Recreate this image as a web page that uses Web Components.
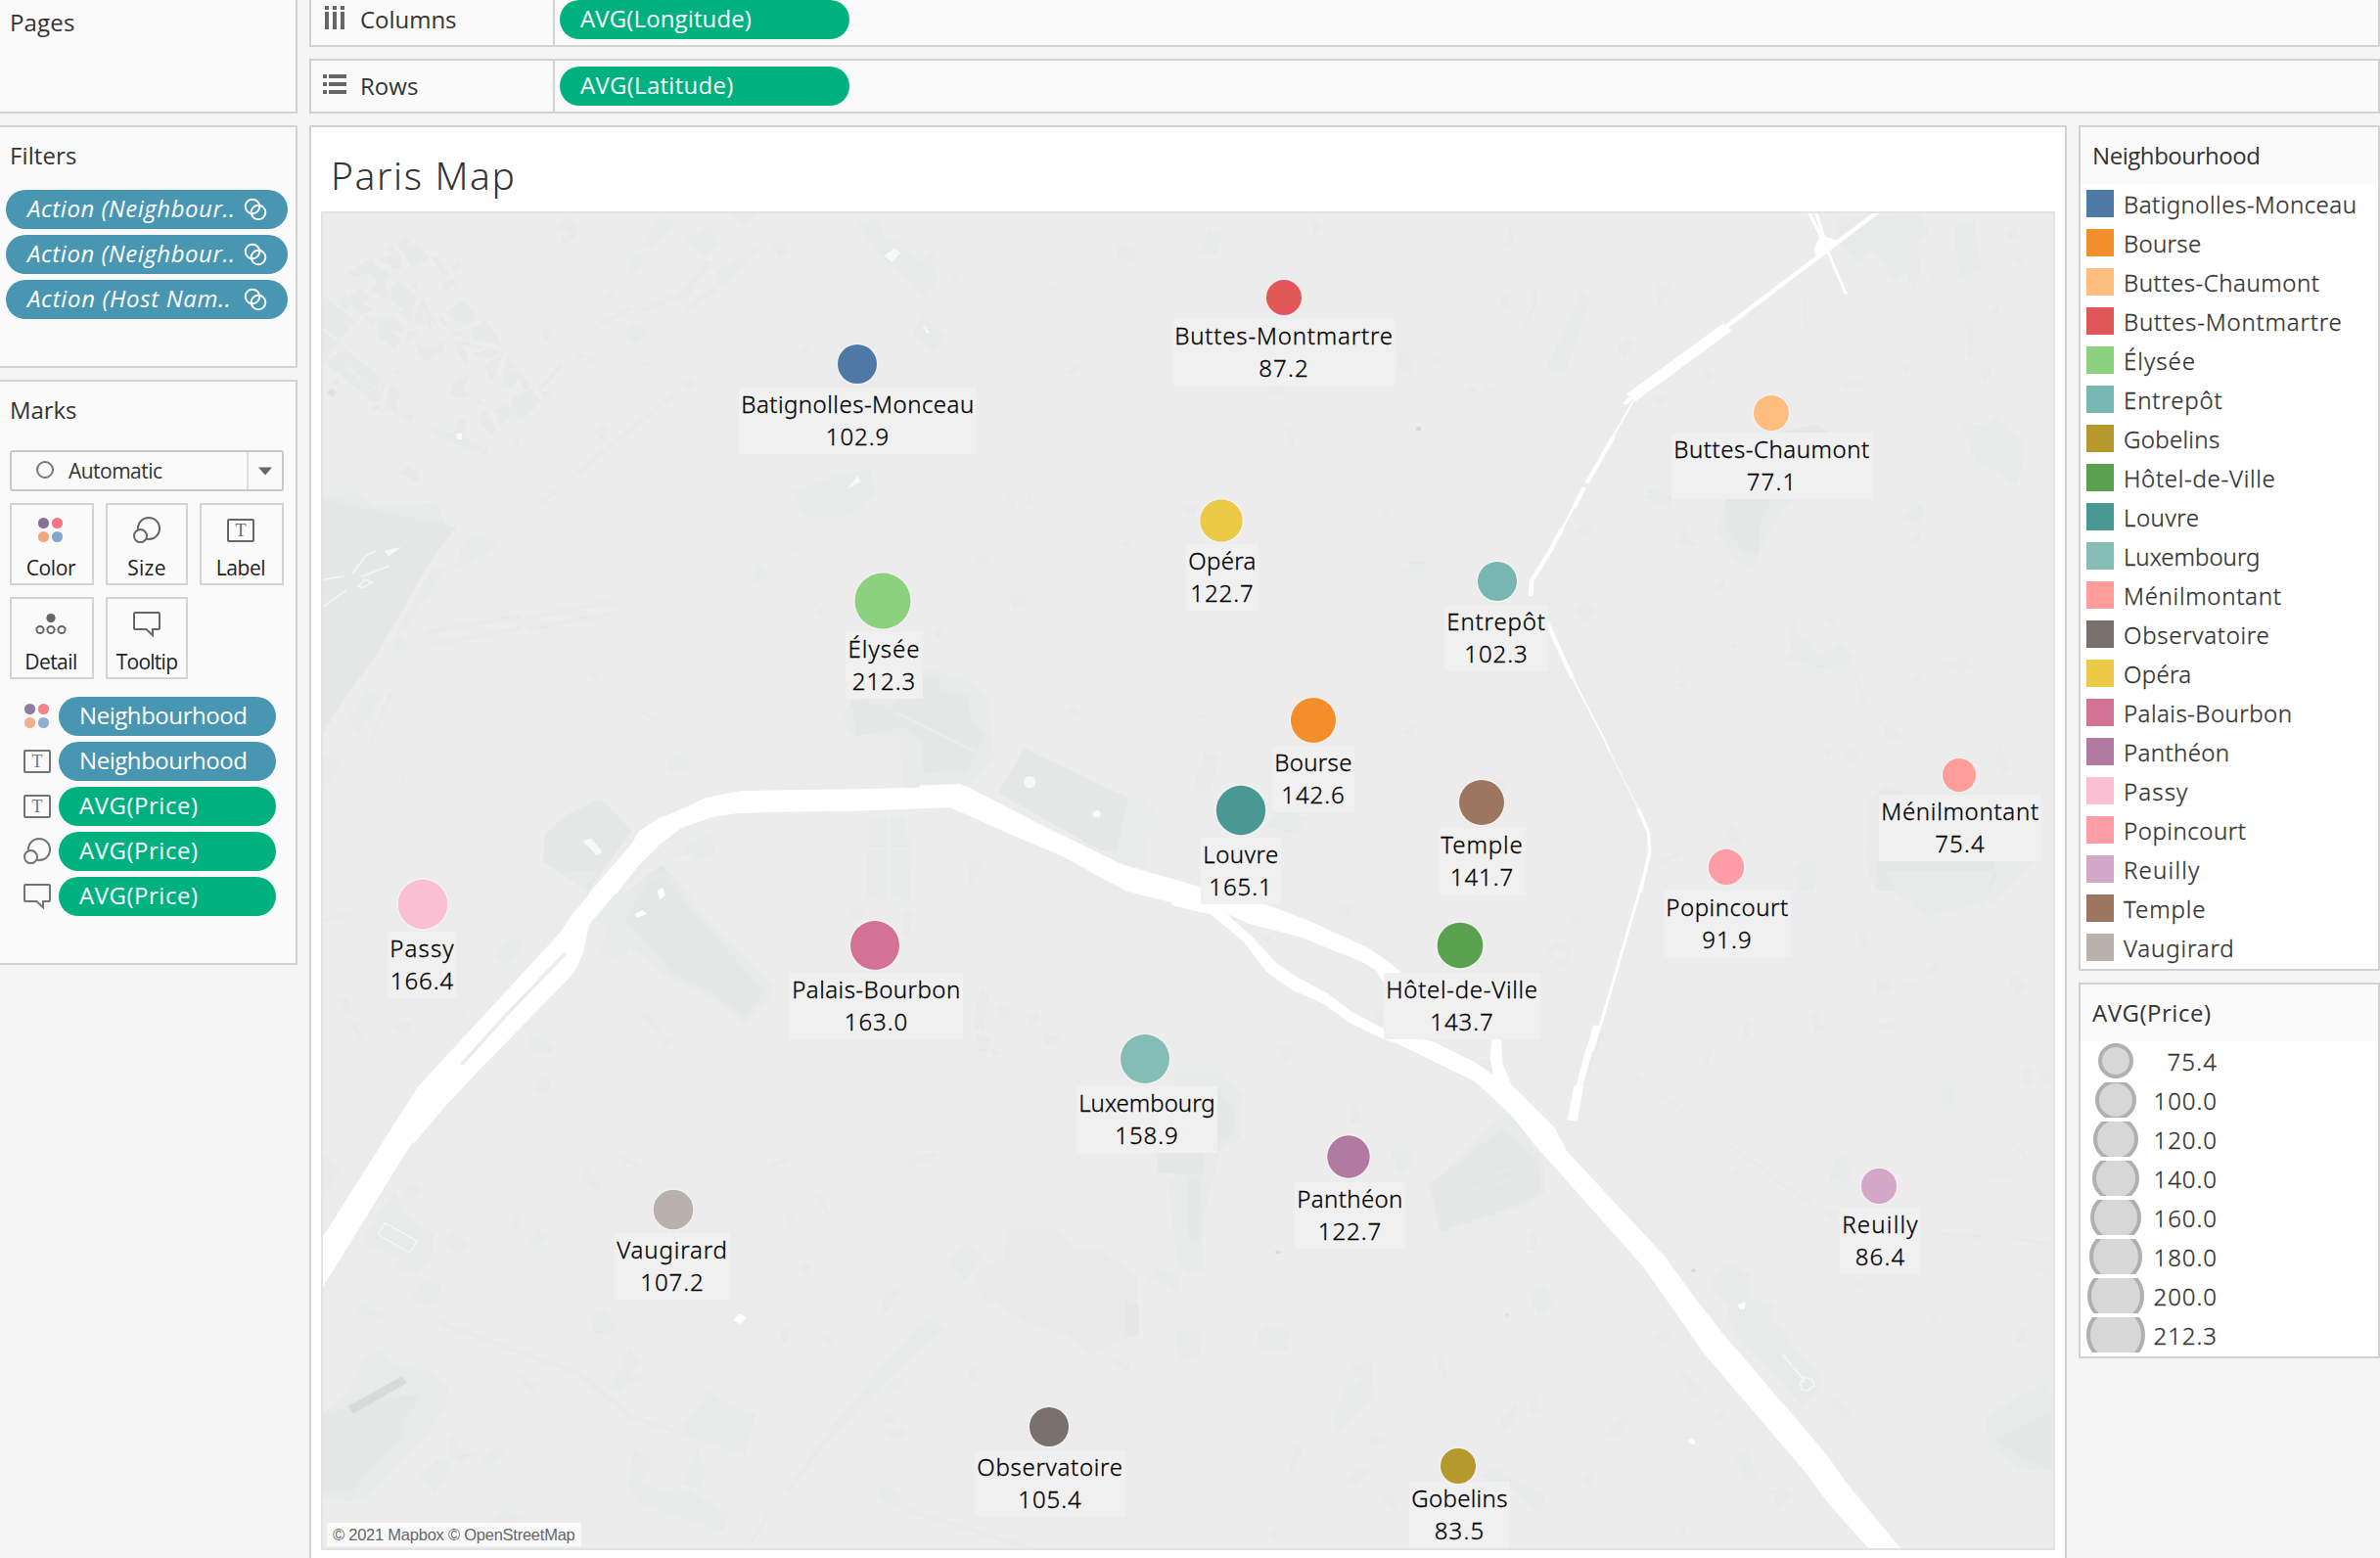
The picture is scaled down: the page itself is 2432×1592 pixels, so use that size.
<!DOCTYPE html>
<html lang="en">
<head>
<meta charset="utf-8">
<title>Paris Map</title>
<style>
html,body{margin:0;padding:0}
body{width:2432px;height:1592px;overflow:hidden;background:#f5f5f5;font-family:"Open Sans","Noto Sans",sans-serif;font-size:24px;color:#333}
</style>
</head>
<body>
<viz-workbook></viz-workbook>
<script>
const define = (name, html, setup) => {
  const tpl = document.createElement('template');
  tpl.innerHTML = html;
  customElements.define(name, class extends HTMLElement {
    connectedCallback() {
      if (this.shadowRoot) return;
      const root = this.attachShadow({ mode: 'open' });
      root.appendChild(tpl.content.cloneNode(true));
      if (setup) setup(this, root);
    }
  });
};

const NEIGHBOURHOODS = [
  // name, colour, text width, price, cx, cy, r, label centre, label top
  ['Batignolles-Monceau', '#4e79a7', 236, '102.9', 876, 372, 20, 876, 396],
  ['Bourse', '#f28e2b', 77, '142.6', 1342, 736, 23, 1342, 762],
  ['Buttes-Chaumont', '#ffbe7d', 198, '77.1', 1810, 422, 18, 1810, 442],
  ['Buttes-Montmartre', '#e15759', 221, '87.2', 1312, 304, 18, 1312, 326],
  ['Élysée', '#8cd17d', 71.5, '212.3', 902, 614, 28.5, 903, 646],
  ['Entrepôt', '#76b7b2', 99, '102.3', 1530, 594, 20, 1529, 618],
  ['Gobelins', '#b6992d', 96, '83.5', 1490, 1498, 18, 1491, 1514],
  ['Hôtel-de-Ville', '#59a14f', 153, '143.7', 1492, 966, 23.3, 1494, 994],
  ['Louvre', '#499894', 75, '165.1', 1268, 828, 25.2, 1268, 856],
  ['Luxembourg', '#86bcb6', 137, '158.9', 1170, 1082, 25, 1172, 1110],
  ['Ménilmontant', '#ff9d9a', 159, '75.4', 2002, 792, 17, 2003, 812],
  ['Observatoire', '#79706e', 147, '105.4', 1072, 1458, 20, 1073, 1482],
  ['Opéra', '#edc948', 67, '122.7', 1248, 532, 21.7, 1249, 556],
  ['Palais-Bourbon', '#d37295', 170, '163.0', 894, 966, 25, 895, 994],
  ['Panthéon', '#b07aa1', 106, '122.7', 1378, 1182, 21.7, 1379, 1208],
  ['Passy', '#fabfd2', 64, '166.4', 432, 924, 25.2, 431, 952],
  ['Popincourt', '#ff9da7', 123, '91.9', 1764, 886, 18.2, 1765, 910],
  ['Reuilly', '#d4a6c8', 76, '86.4', 1920, 1212, 18, 1921, 1234],
  ['Temple', '#9d7660', 82, '141.7', 1514, 820, 23, 1514, 846],
  ['Vaugirard', '#bab0ac', 111, '107.2', 688, 1236, 20.3, 687, 1260]
];

/* Single line of text tracked out to a given width */
define('fit-text', `<style>:host{display:block;white-space:pre;line-height:inherit}span{display:inline-block}</style><span><slot></slot></span>`,
  (host, root) => {
    const s = root.querySelector('span');
    const w = parseFloat(host.getAttribute('w'));
    const natural = s.getBoundingClientRect().width;
    const n = host.textContent.length;
    if (w && natural) s.style.letterSpacing = ((w + 2.5 - natural) / n).toFixed(3) + 'px';
  });

const ICONS = {
  color: '<g stroke="none"><circle cx="6.5" cy="6.5" r="5.6" fill="#86709a"/><circle cx="20.5" cy="6.5" r="5.6" fill="#f97484"/><circle cx="6.5" cy="20.5" r="5.6" fill="#f4a67d"/><circle cx="20.5" cy="20.5" r="5.6" fill="#82a6cd"/></g>',
  size: '<circle cx="16" cy="12" r="11.1"/><circle cx="7.5" cy="19.6" r="6.5" fill="#fafafa"/>',
  label: '<rect x="1" y="3" width="26" height="22" rx="1"/><text x="14" y="20" text-anchor="middle" font-family="Liberation Serif,serif" font-size="18" fill="#666" stroke="none">T</text>',
  detail: '<circle cx="14" cy="7.5" r="4.6" fill="#666" stroke="none"/><circle cx="3" cy="19.5" r="3.6"/><circle cx="14" cy="19.5" r="3.6"/><circle cx="25" cy="19.5" r="3.6"/>',
  tooltip: '<path d="M2 2H26Q27 2 27 3V18Q27 19 26 19H20V25.2L13.5 19H2Q1 19 1 18V3Q1 2 2 2Z"/>',
  columns: '<path fill="#666" stroke="none" d="M2 2h4v4H2zM10 2h4v4h-4zM18 2h4v4h-4zM2 8h4v18H2zM10 8h4v18h-4zM18 8h4v18h-4z"/>',
  rows: '<path fill="#666" stroke="none" d="M0 4h4v4H0zM0 12h4v4H0zM0 20h4v4H0zM6 4h18v4H6zM6 12h18v4H6zM6 20h18v4H6z"/>',
  link: '<g stroke="#fff"><ellipse cx="11" cy="11" rx="7.3" ry="7.3"/><ellipse cx="17" cy="17" rx="7.3" ry="7.3"/></g>',
  circle: '<circle cx="14" cy="14" r="8" stroke="#777"/>',
  arrow: '<path fill="#666" stroke="none" d="M7 10.5H21L14 18.5Z"/>'
};
define('viz-icon', `<style>:host{display:block;width:28px;height:28px;flex:none}svg{display:block;overflow:visible}</style><svg width="28" height="28" fill="none" stroke="#666" stroke-width="2"></svg>`,
  (host, root) => { root.querySelector('svg').innerHTML = ICONS[host.getAttribute('name')]; });

define('viz-card', `<style>
:host{display:block;box-sizing:border-box;border:2px solid #d3d3d3;background:#fafafa;overflow:hidden}
header{height:58px;line-height:57px;padding-left:var(--head-x,9px)}
</style><header><slot name="title"></slot></header><slot></slot>`);

define('viz-pill', `<style>
:host{display:flex;box-sizing:border-box;height:40px;line-height:37px;border-radius:20px;padding-left:21px;color:#fff;background:#4996b2;overflow:hidden}
:host([kind=measure]){background:#00b180}
:host([action]){font-style:italic;justify-content:space-between;padding-left:22px;padding-right:19px}
viz-icon{margin-top:6px;display:none}:host([action]) viz-icon{display:block}
</style><slot></slot><viz-icon name="link"></viz-icon>`);

define('mark-button', `<style>
:host{display:flex;flex-direction:column;align-items:center;box-sizing:border-box;height:84px;border:2px solid #d3d3d3;padding-top:12px;padding-right:var(--nudge,0px);font-size:21px;color:#222}
div{line-height:42px;margin-top:3px}
</style><viz-icon></viz-icon><div><slot></slot></div>`,
  (host, root) => root.querySelector('viz-icon').replaceWith(Object.assign(document.createElement('template'), { innerHTML: `<viz-icon name="${host.getAttribute('icon')}"></viz-icon>` }).content));

define('viz-shelf', `<style>
:host{display:flex;box-sizing:border-box;height:56px;border:2px solid #d3d3d3;background:#fafafa}
.name{display:flex;box-sizing:border-box;width:249px;border-right:2px solid #d3d3d3;padding-left:12px;line-height:51px}
.icon{width:38px;padding-top:10px}
.pills{padding:6px 0 0 5px;width:296px}
</style><div class="name"><div class="icon"><slot name="icon"></slot></div><slot name="title"></slot></div><div class="pills"><slot></slot></div>`);

define('mark-select', `<style>
:host{display:flex;box-sizing:border-box;height:42px;border:2px solid #c8c8c8;border-radius:3px;font-size:21px;line-height:39px;margin:12px 12px 12px 10px}
.c{padding:4px 10px 0 20px}.t{flex:1}.a{width:34px;border-left:2px solid #dedede;padding-top:5px;display:flex;justify-content:center}
</style><div class="c"><viz-icon name="circle"></viz-icon></div><div class="t"><slot></slot></div><div class="a"><viz-icon name="arrow"></viz-icon></div>`);

define('mark-row', `<style>:host{display:grid;grid-template-columns:28px 222px;column-gap:8px;padding-left:24px}.i{padding-top:6px;opacity:.9}</style><div class="i"><slot name="icon"></slot></div><slot></slot>`);

define('viz-sidebar', `<style>
:host{display:flex;flex-direction:column;gap:12px;--head-x:9px}
viz-card{border-left:none}
.pages{height:116px;border-top:none}.pages fit-text{margin-top:-6px}
.filters{height:248px}.marks{height:598px}
.list{display:flex;flex-direction:column;gap:6px}
.filters .list{padding:6px 8px 0 6px}
.marks .list{padding-top:18px}
.grid{display:grid;grid-template-columns:86px 84px 86px;gap:12px;padding-left:10px}
mark-button[icon=color],mark-button[icon=label],mark-button[icon=detail]{--nudge:2px}
viz-card{--head-x:10px}
</style>
<viz-card class="pages"><fit-text slot="title" w="64">Pages</fit-text></viz-card>
<viz-card class="filters"><fit-text slot="title" w="66">Filters</fit-text>
<div class="list">
<viz-pill action><fit-text w="210">Action (Neighbour..</fit-text></viz-pill>
<viz-pill action><fit-text w="210">Action (Neighbour..</fit-text></viz-pill>
<viz-pill action><fit-text w="206">Action (Host Nam..</fit-text></viz-pill>
</div></viz-card>
<viz-card class="marks"><fit-text slot="title" w="66">Marks</fit-text>
<mark-select><fit-text w="93">Automatic</fit-text></mark-select>
<div class="grid">
<mark-button icon="color"><fit-text w="48">Color</fit-text></mark-button>
<mark-button icon="size"><fit-text w="37">Size</fit-text></mark-button>
<mark-button icon="label"><fit-text w="48">Label</fit-text></mark-button>
<mark-button icon="detail"><fit-text w="51">Detail</fit-text></mark-button>
<mark-button icon="tooltip"><fit-text w="60">Tooltip</fit-text></mark-button>
</div>
<div class="list">
<mark-row><viz-icon slot="icon" name="color"></viz-icon><viz-pill><fit-text w="169">Neighbourhood</fit-text></viz-pill></mark-row>
<mark-row><viz-icon slot="icon" name="label"></viz-icon><viz-pill><fit-text w="169">Neighbourhood</fit-text></viz-pill></mark-row>
<mark-row><viz-icon slot="icon" name="label"></viz-icon><viz-pill kind="measure"><fit-text w="119">AVG(Price)</fit-text></viz-pill></mark-row>
<mark-row><viz-icon slot="icon" name="size"></viz-icon><viz-pill kind="measure"><fit-text w="119">AVG(Price)</fit-text></viz-pill></mark-row>
<mark-row><viz-icon slot="icon" name="tooltip"></viz-icon><viz-pill kind="measure"><fit-text w="119">AVG(Price)</fit-text></viz-pill></mark-row>
</div></viz-card>`);

define('viz-legends', `<style>
:host{display:flex;flex-direction:column;gap:12px;width:308px;--head-x:12px}
.body{background:#fff;font-family:"Noto Sans","Open Sans",sans-serif;font-weight:300;-webkit-text-stroke:.3px}
.colors{height:864px}.colors .body{height:802px;padding:6px 0 0 6px;box-sizing:border-box}
.row{display:flex;height:28px;margin-bottom:12px;line-height:30px}
.sw{width:28px;margin-right:10px}
.sizes{height:384px}.sizes .body{height:322px;box-sizing:border-box;padding:2px 0 0 6px}
.s{display:flex;height:36px;margin-bottom:4px;line-height:38px}
.s svg{width:60px;height:36px;display:block}
.v{width:74px;display:flex;justify-content:flex-end}
</style>
<viz-card class="colors"><fit-text slot="title" w="169">Neighbourhood</fit-text><div class="body" id="c"></div></viz-card>
<viz-card class="sizes"><fit-text slot="title" w="119">AVG(Price)</fit-text><div class="body" id="s"></div></viz-card>`,
  (host, root) => {
    root.getElementById('c').innerHTML = NEIGHBOURHOODS.map(n =>
      `<div class="row"><div class="sw" style="background:${n[1]}"></div><fit-text w="${n[2]}">${n[0]}</fit-text></div>`).join('');
    root.getElementById('s').innerHTML = [['75.4', 36], ['100.0', 42], ['120.0', 46], ['140.0', 48], ['160.0', 52], ['180.0', 54], ['200.0', 58], ['212.3', 60]].map(([v, d]) =>
      `<div class="s"><svg viewBox="0 0 60 36"><circle cx="30" cy="18" r="${d / 2 - 2}" fill="#d7d7d7" stroke="#b0b0b0" stroke-width="4"/></svg><div class="v"><fit-text w="${v.length > 4 ? 63 : 49}">${v}</fit-text></div></div>`).join('');
  });

/* Faint ground detail, water, then labels with circles over them */
define('paris-map', `<style>
:host{display:block;position:relative;width:1772px;height:1368px;margin-left:10px;background:#ececec;overflow:hidden}
svg{display:block}
.over{position:absolute;left:0;top:0}
.label{position:absolute;height:68px;line-height:33px;background:#f0f0f0;color:#000;display:flex;flex-direction:column;align-items:center;font-family:"Noto Sans","Open Sans",sans-serif;font-weight:300;-webkit-text-stroke:.3px}
.attr{position:absolute;left:6px;top:1340px;width:260px;height:24px;box-sizing:border-box;padding-left:6px;background:#fafafa;color:#666;font:16.5px/24px "Liberation Sans",sans-serif}
</style>
<svg width="1772" height="1368" viewBox="328 216 1772 1368">
<g id="suburb" transform="translate(320 210) scale(.33333)">
<path fill="#e6e9e7" d="M108 205L178 160L188 180L240 215L215 245L165 205L120 222ZM218 130L240 118L268 155L270 195L255 192L198 168L240 150ZM255 110L285 92L300 120L320 118L358 160L302 190ZM275 185L292 205L285 213L270 197ZM362 160L380 155L418 212L400 216ZM425 195L455 170L440 208ZM392 240L428 224L440 242L405 266ZM740 68L790 36L818 82L772 118L758 102L785 85L775 68L750 82ZM695 388L715 375L735 393L715 413ZM655 18L690 18L665 28Z"/>
<path fill="#e6e9e7" d="M75 298L98 272L120 300L100 322ZM112 282L140 254L175 280L150 300L185 318L150 335L195 345L180 375L158 345L128 320ZM170 262L205 230L235 268L215 285ZM240 245L262 232L318 280L300 358L258 325L280 320L235 290ZM300 240L315 238L315 255L302 258ZM305 360L335 280L392 385L330 315L345 368ZM345 340L360 345L368 378L350 372Z"/>
<path fill="#e6e9e7" d="M202 345L240 350L232 333L280 365L280 390L245 385L268 415L250 442L192 395ZM290 382L322 385L298 418L285 415ZM310 420L350 438L405 415L395 450L370 455L352 478L330 470ZM388 335L412 365L402 372L386 345ZM402 328L458 295L498 330L485 362L470 370ZM480 378L528 352L588 435L545 420L490 410ZM425 388L445 384L465 398L432 402ZM425 408L515 432L512 442L458 428L480 485L465 492ZM490 455L550 435L580 455L520 475Z"/>
<path fill="#e6e9e7" d="M522 490L585 455L550 545ZM575 550L595 462L668 550L650 568L632 535L590 562ZM608 590L668 562L700 602L640 658L610 640ZM552 625L600 612L612 632L575 676ZM508 655L525 622L565 690L545 702ZM430 540L470 520L480 530L455 560L488 585L450 592L420 580ZM495 605L510 592L522 615ZM250 505L262 500L265 518L252 522ZM690 560L760 482L768 490L700 568L735 575L708 595Z"/>
<path fill="#e6e9e7" d="M24 272L130 355L80 410L24 370ZM24 382L76 420L36 480L24 478ZM36 480L98 442L220 535L212 590L185 603ZM215 620L240 545L272 570L252 600L262 640ZM178 622L198 610L218 635ZM262 640L312 640L302 668ZM362 700L372 682L430 700L452 645L468 665L462 712L535 745L528 765ZM260 818L290 800L322 815L324 852ZM610 730L625 712L632 722L620 742ZM862 695L885 672L905 700L885 722ZM58 540L72 528L84 542L72 554ZM400 0"/>
<path fill="none" stroke="#ececec" stroke-width="4" d="M100 478L180 575M108 500L205 570L212 530M582 460L550 550M595 510L625 500"/>
<path fill="#dfe2e1" d="M40 575L55 560L72 570L62 587Z"/>
<path fill="#fafbfa" d="M438 700L458 696L456 718L442 718Z"/>
</g>
<g id="nw" transform="translate(320 210) scale(.57398 .44643)">
<g fill="#e7eae9">
<path d="M615 25L645 40L600 98L585 90ZM662 80L705 45L725 85L695 120ZM560 130L575 115L590 125L565 165ZM715 180L720 150L765 115L775 130L730 182ZM745 20L795 15L765 45ZM815 90L830 80L845 105L830 122Z"/>
<path d="M580 235L650 200L700 125L710 130L670 205L590 245ZM655 248L680 210L715 185L718 200ZM490 298L510 265L565 230L568 240L515 275ZM552 290L575 268L600 290L575 320ZM520 205L528 195L536 205L526 214ZM465 350L475 338L485 350ZM488 352L498 342L510 366ZM778 100L792 90L796 97L782 112Z"/>
<path d="M652 405L665 395L678 408L665 425ZM460 618L640 428L646 434L465 625ZM400 680L432 650L436 656L403 686ZM500 515L515 500L525 515L512 538ZM570 375L605 352L600 362Z"/>
<path d="M970 40L1005 30L1020 75L1050 75L1040 95L1085 130L1105 105L1100 145L1113 165L1090 215L1070 180L1000 105ZM1085 255L1128 305L1105 338L1068 290Z"/>
<path d="M855 655L925 620L992 605L1003 655L955 710L890 713L868 700ZM1235 660L1250 680L1245 703ZM1272 645L1285 685L1268 680Z"/>
<path d="M1430 95L1445 85L1465 100L1460 130L1435 120ZM1300 178L1325 188L1320 195ZM1135 165L1150 155L1142 185ZM1340 380L1368 362L1350 390ZM868 335L885 322L880 342ZM1432 775L1460 765L1450 785ZM1342 1155L1352 1148L1370 1163L1362 1175Z"/>
<path d="M775 860L797 820L813 855ZM1175 800L1205 802L1203 820L1180 818ZM1240 895L1268 890L1268 918L1245 925ZM890 905L912 925L900 942ZM853 785L862 780L865 795ZM1105 975L1118 965L1124 980L1112 992Z"/>
<path d="M250 835L270 765L300 752L327 780L285 815ZM152 965L185 890L215 825L235 835L190 920L165 970ZM195 985L210 968L365 935L370 945ZM380 940L525 902L540 912L385 948ZM200 1003L370 962V972L220 1010ZM380 965L520 932L540 938L390 972ZM138 1000L152 982L172 998L165 1020L145 1018Z"/>
<path d="M65 1175L95 1105L122 1125L80 1210ZM98 1225L135 1115L145 1118L103 1230ZM14 1260L50 1275L14 1350ZM155 1318L168 1285L160 1325ZM575 1155L615 1172L610 1180ZM490 1080L500 1068L508 1085ZM630 1270L652 1256L672 1275L668 1295L635 1297Z"/>
<path d="M14 662L90 660L105 690L220 680L235 728L14 740Z" opacity=".7"/>
<path d="M990 1400L1055 1400L1055 1440L1067 1445L1063 1568L985 1568ZM645 1490L670 1455L705 1440L715 1480L680 1505L670 1485ZM1165 1515L1180 1495L1195 1505L1170 1568Z"/>
<path d="M940 1175L960 1130L1095 1060L1165 1090L1205 1135L1212 1270L1170 1325L1050 1340L1045 1215L960 1210Z" opacity=".8"/>
<path d="M1440 1355L1480 1355L1510 1410L1480 1460L1485 1520L1420 1500Z" opacity=".6"/>
</g>
<g fill="#e4e7e5">
<path d="M14 672L255 735L205 820L145 960L95 1060L60 1120L14 1215Z"/>
<path d="M412 1440L450 1395L512 1358L567 1430L490 1568L410 1502Z"/>
<path d="M960 1130L1030 1150L1065 1085L1110 1080L1120 1110L1165 1120L1170 1170L1195 1215L1165 1295L1085 1300L1085 1225L1050 1195L965 1215Z"/>
<path d="M1265 1242L1450 1355L1430 1480L1400 1475L1220 1345Z"/>
<path d="M560 1568L620 1510L665 1568Z"/>
</g>
<g fill="none" stroke="#ececec" stroke-width="4"><path d="M1035 1160L1180 1250M985 1472H1065M985 1524H1060M1025 1400V1568"/></g>
<g fill="#f7f9f8"><path d="M1017 115L1035 98L1046 108L1030 130ZM480 1455L495 1448L515 1480L505 1488ZM125 790L158 782L135 802ZM950 650L970 618L975 632ZM1085 272L1098 290L1093 294Z"/><ellipse cx="1276" cy="1320" rx="10" ry="14"/><ellipse cx="1395" cy="1393" rx="7" ry="8"/></g>
<path fill="none" stroke="#f5f7f6" stroke-width="3" d="M70 842L95 800L112 790M14 857L55 848M85 850L135 825M14 922L60 880M80 872L92 856L105 862L90 874Z"/>
<path fill="#fff" d="M490 1575L548 1490L570 1455L580 1432L615 1402L635 1393L700 1355L760 1340L985 1335L1080 1332V1327L1150 1324L1168 1332L1300 1420L1440 1508L1575 1558L1575 1610L1450 1570L1405 1540L1335 1490L1225 1430L1135 1378L960 1386L820 1388L750 1392L710 1400L655 1425L620 1460L580 1510L540 1575Z"/>
</g>
<g id="ne" transform="translate(1200 210) scale(.5816 .44643)">
<g fill="#e7eae9">
<path d="M45 105L60 55L85 62L75 112ZM240 40L245 25L260 45L245 75ZM655 370L715 197L733 210L690 372L680 380ZM575 205L590 205L588 235L572 228ZM625 190L638 195L630 250L608 300L628 230ZM580 95L590 50L596 90Z"/>
<path d="M1160 25L1310 20L1325 65L1305 85L1310 150L1300 200L1285 150L1265 170L1225 100L1200 130L1165 85ZM1370 50L1405 35L1418 150L1380 165ZM1325 145L1340 185L1330 175ZM1108 195L1113 290L1105 270ZM1462 60L1480 50L1485 80L1465 75ZM1475 120H1490V132H1478Z"/>
<path d="M845 180L875 182L850 235ZM780 320L795 303L808 310L790 355ZM395 340L410 335L418 385L395 370ZM515 415H530V427H515ZM545 417H562V427H545ZM455 350L472 352V362L457 360ZM166 415H195L190 433H168ZM920 355L948 395L938 405ZM845 440L865 435L858 458L842 450Z"/>
<path d="M1390 265L1405 262L1402 350H1395ZM1412 370L1435 372L1425 410ZM1430 245L1448 220L1445 250ZM1277 368L1298 358L1285 385ZM1175 410L1205 397L1210 410L1180 420ZM1380 495L1420 505L1442 485L1490 545L1495 575L1480 640L1445 610L1410 590Z"/>
<path d="M825 670L835 648L875 665L870 690ZM702 745L720 730L735 735L725 763ZM885 770L895 735L910 770L922 778L905 782ZM358 690L378 700L370 718ZM390 825L412 830L415 815H440L438 838H412ZM702 930L720 905L743 925L722 953ZM965 875L945 885L968 845ZM1275 715L1310 685L1320 700L1305 730ZM1292 765L1305 745L1312 765L1295 782Z"/>
<path d="M1075 975L1092 952L1095 985L1120 1000L1125 1025L1150 1020L1170 1005L1192 1030L1185 1050L1130 1058L1100 1045L1065 1040L1085 1020ZM1190 1055L1218 1135H1208ZM1352 1050L1390 1030L1403 1060L1380 1070ZM1145 945L1155 940L1168 970ZM1240 1180L1280 1215L1275 1228L1255 1220ZM1175 1260L1190 1240L1203 1250L1188 1275ZM1440 1270L1450 1240L1470 1285L1460 1300ZM1138 1245L1155 1240L1152 1272ZM970 1008L985 1002L988 1015ZM885 1050L898 1065L890 1072ZM885 1092H900V1105H888Z"/>
<path d="M30 1335L55 1250L77 1260L62 1345ZM400 1205L415 1185L427 1195L418 1215ZM555 1300L585 1330L580 1345ZM840 1508L890 1480L888 1490L845 1512ZM965 1440L980 1420L1000 1455L985 1465ZM1085 1520L1108 1497L1128 1505L1125 1568H1100ZM160 1420L190 1385L235 1400L222 1430L195 1435ZM18 690H38V708H20ZM40 1160L60 1170L45 1178ZM195 510H205L210 555H200ZM1298 1080L1315 1070V1085L1302 1090Z"/>
<path d="M1218 1355L1250 1330L1523 1420L1510 1500L1460 1568H1230L1215 1500ZM950 745L970 672L1085 672L1055 730L1030 790L1010 830L985 810Z" opacity=".8"/>
</g>
<g fill="#e4e7e5"><path d="M970 672H1050L1030 730L1025 800L1000 790L970 745ZM1060 520L1130 500L1150 520ZM1235 1500L1440 1500L1450 1568H1235Z"/></g>
<circle cx="429" cy="511" r="4.5" fill="#d5d8d7"/>
<g fill="none" stroke="#fff" stroke-linecap="butt">
<path stroke-width="9" d="M1240 10L965 282"/><path stroke-width="23" d="M972 278L802 440"/><path stroke-width="8" d="M812 430L790 455"/>
<path stroke-width="3.5" d="M806 448L770 530"/><path stroke-width="8" d="M772 528L725 635M720 645L702 692"/><path stroke-width="4" d="M702 690L678 748"/>
<path stroke-width="8" d="M680 742L660 792L628 858L626 890" stroke-linecap="round"/>
<path stroke-width="6" d="M1115 15L1138 75L1138 115M1127 15L1142 75"/><path stroke-width="5" d="M1148 105L1180 203"/>
<path stroke-width="8" d="M655 955L700 1083"/><path stroke-width="3" d="M700 1083L755 1220L765 1250"/><path stroke-width="2.5" stroke="#f8f8f8" d="M765 1250L817 1385"/><path stroke-width="6" d="M815 1380L833 1435L835 1480L819 1572"/>
</g>
<path fill="#fff" d="M1128 120L1124 100L1135 68L1168 82L1145 112Z"/>
<path fill="#fff" d="M-5 1545L60 1565V1580H-5Z"/>
</g>
<g id="sw" transform="translate(320 890) scale(.57398 .4477)">
<g fill="#e7eae9">
<path d="M445 0H510L480 42ZM515 170L525 110L562 180L545 198L505 190ZM325 195L350 155L375 160L372 185L345 215ZM378 405L390 375L430 400L420 418ZM395 500L402 470L422 480L418 515ZM580 325L595 320L620 355L612 372ZM617 395L635 372L645 382L625 405ZM42 292L60 290L70 320L55 325ZM65 350L75 345L92 390L80 390ZM145 355L185 335L165 378ZM14 108L70 92L72 100L14 118ZM258 340L270 310L272 325Z"/>
<path d="M985 5L1020 0L1018 68L985 62ZM1028 10L1062 15V68L1030 60ZM955 85H985L975 115L955 105ZM1052 90H1068L1060 155L1048 150ZM1175 345L1190 268L1202 285L1195 365L1178 360ZM1182 372L1205 380L1205 412H1185ZM1218 305H1240V335L1220 330ZM1270 325L1293 322L1292 345L1275 352ZM1297 370L1333 378L1318 395L1303 397ZM1015 408L1040 390M1205 405L1228 412L1210 426Z"/>
<path d="M1057 668L1070 650L1110 640L1112 648L1065 678ZM548 648L583 668L580 678L555 665ZM475 705L490 675L500 700L515 715L505 735ZM810 670L842 655L845 662L815 678ZM160 735L175 710L193 728L182 748ZM235 850L245 825L278 850L262 875L240 865ZM348 810L362 780L373 790L360 818ZM380 845L400 815L422 830L400 858ZM895 740L903 738L920 780L912 782ZM838 790L848 775L860 790L850 812ZM865 905L875 892L887 905L877 920Z"/>
<path d="M14 640L50 680L14 755ZM90 830L145 730L160 780L215 830L210 880L180 922L145 905L155 880L92 850ZM172 975L195 932L228 950L222 980L200 995ZM78 1010L88 988L132 1020ZM492 1015L515 1000L548 1050L500 1055ZM215 1015L240 1032L480 1145L570 1240L645 1275L640 1282L560 1250L475 1155L235 1042ZM525 1180L565 1092L583 1120L565 1150L585 1155L540 1190Z"/>
<path d="M1127 895L1160 848L1193 880L1160 935ZM1010 1020L1018 970L1035 948L1050 955L1030 990ZM1075 1040L1100 1025L1130 1045L1090 1080L975 1220L930 1285L845 1420L840 1415L925 1265ZM1182 965L1200 960L1208 980L1195 985ZM1485 930L1500 905L1545 930L1540 965L1515 945ZM1535 1050L1568 1050V1115L1540 1118ZM1410 1110L1455 1125L1452 1145Z"/>
<path d="M650 1285L705 1185L745 1220L788 1240L768 1332ZM572 1315L605 1350L580 1400L650 1425L665 1410L740 1470L730 1505L580 1445L560 1400ZM675 1350L685 1318L692 1350L698 1370L690 1410L655 1400ZM190 1380L225 1340L250 1360L215 1418ZM245 1285L265 1330L290 1330L262 1355L240 1330ZM362 1145L400 1175L395 1195L380 1185ZM290 1350L325 1318L350 1320L320 1355Z"/>
<path d="M1005 1402L1040 1415L1045 1430L1040 1450L1005 1435ZM1055 1452L1300 1550H1270L1055 1462ZM1015 1240L1040 1245L1035 1262L1015 1258ZM1015 1278L1050 1270L1055 1285L1030 1300ZM1020 1165L1035 1155L1052 1170L1035 1185ZM1165 1135L1180 1130L1185 1165H1168ZM775 1545L790 1500L815 1452L800 1500ZM830 1070L838 1040L852 1045L840 1080ZM905 1070L920 1060L928 1068L920 1085ZM310 1490L340 1460L380 1475L340 1490Z"/>
<path d="M14 1240L60 1190L90 1110L120 1095L145 1125L215 1145L240 1180L235 1230L200 1290L170 1330L95 1430L60 1440L14 1430Z" opacity=".7"/>
<path d="M1175 920L1228 885L1235 820L1325 818L1350 860L1410 870L1465 920L1470 1060L1440 1070L1390 1105L1340 1060L1265 1030L1190 965Z" fill="#e8e9e8"/>
<path d="M500 110L540 60L600 10L640 5L690 90L820 265L815 290L768 348L720 300L640 250L580 190Z" opacity=".8"/>
</g>
<g fill="#e4e7e5">
<path d="M14 1240L70 1225L130 1200L195 1195L155 1260L165 1290L90 1380L70 1418L14 1418Z"/>
<path d="M555 110L600 20L630 15L680 100L805 275L765 335L720 285L640 235L590 155Z"/>
<path d="M1445 980L1470 990L1470 1060L1445 1060Z"/>
</g>
<path fill="#d9dbda" d="M62 1222L158 1153L167 1168L72 1238Z"/>
<path fill="none" stroke="#f6f8f7" stroke-width="2.5" d="M128 803L185 845L172 872L116 830Z"/>
<path fill="#fff" d="M748 1025L758 1010L771 1018L762 1035ZM612 45L622 37L627 55L618 65ZM572 100L585 90L595 98L578 106Z"/>
<path fill="#fff" d="M530 -8L455 110L440 140L185 495L10 850V965L175 622L182 618L240 530L290 462L465 232L480 190L492 122L576 -8Z"/>
<path stroke="#ececec" stroke-width="7" d="M449 188L350 320L264 442"/>
</g>
<g id="se" transform="translate(1200 890) scale(.5816 .4477)">
<g fill="#e7eae9">
<path d="M285 85L295 70L318 88L310 105L290 102ZM145 140L172 150L165 168ZM695 105L705 98L718 112L710 128ZM1085 0H1125L1130 25L1110 45ZM1250 0H1440L1420 75L1320 105L1270 50ZM1425 60L1440 25L1470 15L1440 78ZM1198 145L1210 135L1225 170L1210 178ZM1315 230L1340 208L1350 220L1325 238ZM1235 250L1255 248L1262 275L1235 280ZM1285 262L1302 248L1308 262L1290 270ZM1468 250L1480 235L1495 262L1480 290ZM1118 330L1128 322L1145 365L1125 370ZM1238 350L1270 345L1260 362H1242ZM998 380L1005 340L1015 345L1008 380ZM925 438L940 402L948 408L935 445ZM1488 450L1505 448L1510 490H1492ZM1515 465L1540 460V485L1520 482Z"/>
<path d="M175 395L210 405L205 420L195 440L190 410ZM345 320L365 315L368 335L355 340ZM308 555L320 530L330 575H310ZM310 500L345 540L335 535ZM380 640L420 635L418 660L430 660L395 688ZM802 450L825 478L815 478ZM845 500L898 548L895 552L843 505ZM935 588L1050 690L1048 695L935 592ZM1052 700L1120 755V762L1050 705ZM975 695L995 678L990 692ZM1150 705L1160 655L1180 650L1190 690L1180 710ZM1345 825L1420 832L1420 840L1345 832ZM1475 835L1542 848V856L1475 842ZM1430 690L1475 692V700H1430ZM1455 595L1500 650L1495 655ZM1142 770L1165 780V805L1145 790Z"/>
<ellipse cx="1360" cy="514" rx="15" ry="19"/>
<path d="M620 865L628 820L638 845L632 868ZM622 965L640 948L655 955L668 990L640 1015ZM142 1085L148 1055L160 1040L182 1045L205 1050L198 1095L165 1092ZM5 1050L50 1055L45 1110L10 1120ZM328 905L352 890L340 903ZM310 1130L350 1115L345 1160L352 1200L290 1278L278 1255L300 1180L325 1165ZM458 1110L470 1102L482 1150L472 1160ZM885 1145L895 1135L930 1185L915 1200ZM845 1065L860 1048L875 1060L862 1078ZM575 1250L600 1215L605 1230L580 1285ZM622 1215L635 1200L650 1240L625 1240ZM762 1285L785 1245L800 1255L780 1295ZM948 1245L965 1225L978 1235L960 1252ZM1152 1215L1165 1200L1190 1240L1180 1250Z"/>
<path d="M340 1300L348 1282L372 1300L345 1318ZM200 1370L212 1312L225 1318L210 1372ZM303 1390L320 1360L350 1368L320 1398ZM365 1425L395 1420L380 1440L398 1465L378 1450ZM535 1380L560 1360L650 1425L645 1465L600 1420ZM718 1395L735 1365L740 1385L725 1405ZM982 1340L1010 1320L1022 1395L1005 1390ZM1042 1415L1075 1408L1090 1425L1060 1452L1055 1430ZM885 1495L895 1490L900 1515L888 1518ZM165 1520L178 1500L180 1530ZM1478 1045L1495 1045L1498 1070L1480 1078ZM1508 905L1540 905V925L1515 918ZM1195 940L1210 938V952H1198ZM1325 1020L1340 1018L1342 1035H1330Z"/>
<path d="M940 950L955 910L980 898L1010 920L1012 975L1055 990L1050 1020L1140 1165L1105 1225L970 1030L975 990Z"/>
<path d="M1427 1245L1490 1195L1530 1170L1543 1190V1370L1480 1365L1430 1310Z"/>
<path d="M0 460L75 460L120 510L115 610L80 640L65 720L50 800V910L25 920L5 900L-12 700L0 700Z" opacity=".8"/>
<path d="M445 715L470 690L560 570L600 560L650 670L652 735L615 765L465 825Z"/>
<path d="M655 185L670 165L698 180L690 215L665 210Z"/><path d="M530 430H560V470Z M745 360L755 362L735 440L705 540Z"/>
</g>
<path fill="#ececec" d="M665 188L675 176L690 186L684 206L668 202Z"/>
<g fill="#e4e7e5"><path d="M76 505L105 540V600L76 620ZM-30 642H52V690H-30ZM22 700H46V840L25 845ZM450 715L575 590L640 660L645 735L600 765L468 820Z"/><path d="M1440 1300L1543 1230V1370L1490 1340Z"/></g>
<path fill="none" stroke="#e7eae9" stroke-width="3" d="M500 690L530 705L620 670M515 730L640 690M22 775H46"/>
<path fill="none" stroke="#f4f7f6" stroke-width="3.5" d="M1068 1103L1085 1128M1088 1133L1108 1165M1100 1170L1107 1156L1120 1160L1125 1175L1112 1187L1102 1182Z"/>
<path fill="#fff" d="M990 990L1003 983L1002 1000H993ZM903 1300L912 1294L916 1308H908Z"/>
<g fill="#d9dbda"><circle cx="182" cy="870" r="4.5"/><circle cx="912" cy="912" r="4.5"/><circle cx="585" cy="1013" r="3"/></g>
<path fill="#fff" d="M-5 26L48 38L160 76L235 113L340 175L382 212L410 245L410 300L368 255L355 228L330 208L220 150L130 120L92 98L138 152L178 208L215 242L270 280L310 320L368 360L455 390L530 438L560 465L555 425L558 384V370H574V384L577 440L592 487L668 585L690 640L862 880L912 970L960 1050L1145 1330L1180 1395L1280 1552H1224L1150 1445L1110 1375L930 1100L825 905L640 635L590 555L528 480L390 393L370 385L310 348L262 303L205 270L162 230L122 162L65 100L-5 78Z"/>
<g fill="none" stroke="#fff"><path stroke-width="5" d="M829 -5L748 355"/><path stroke-width="14" d="M743 353L730 412"/><path stroke-width="12" d="M729 408L712 490"/><path stroke-width="17" stroke-linejoin="round" d="M711 490L699 570"/></g>
</g>
<rect x="329" y="217" width="1770" height="1366" fill="none" stroke="#e3e3e3" stroke-width="2"/>
</svg>
<div id="labels"></div>
<svg class="over" width="1772" height="1368" viewBox="328 216 1772 1368"><g id="marks"></g></svg>
<div class="attr"><fit-text w="245">© 2021 Mapbox © OpenStreetMap</fit-text></div>`,
  (host, root) => {
    root.getElementById('marks').innerHTML = NEIGHBOURHOODS.map(n =>
      `<circle cx="${n[4]}" cy="${n[5]}" r="${n[6]}" fill="${n[1]}" stroke="#f2f2f2" stroke-width="3" paint-order="stroke"/>`).join('');
    root.getElementById('labels').innerHTML = NEIGHBOURHOODS.map(n => {
      const w = Math.round(n[2] + 7);
      return `<div class="label" style="left:${Math.round(n[7] - 328 - w / 2)}px;top:${n[8] - 216}px;width:${w}px"><fit-text w="${n[2]}">${n[0]}</fit-text><fit-text w="${n[3].length > 4 ? 63 : 49}">${n[3]}</fit-text></div>`;
    }).join('');
  });

define('viz-sheet', `<style>
:host{display:block;box-sizing:border-box;width:1796px;border:2px solid #d3d3d3;border-bottom:none;background:#fff}
h1{margin:0;box-sizing:border-box;height:86px;padding:10px 0 0 20px;font:300 39px/77px "Noto Sans","Open Sans",sans-serif;color:#333}
</style><h1><fit-text w="187">Paris Map</fit-text></h1><paris-map></paris-map>`);

define('viz-workbook', `<style>
:host{display:grid;grid-template-columns:304px 2116px;column-gap:12px;width:2432px;height:1592px;overflow:hidden}
.main{display:flex;flex-direction:column;gap:12px}
.top{height:48px;overflow:hidden;display:flex;flex-direction:column;justify-content:flex-end}
.top viz-shelf{flex:none}
.view{display:flex;gap:12px;height:1464px}
</style>
<viz-sidebar></viz-sidebar>
<div class="main">
<div class="top"><viz-shelf><viz-icon slot="icon" name="columns"></viz-icon><fit-text slot="title" w="96">Columns</fit-text><viz-pill kind="measure"><fit-text w="172.5">AVG(Longitude)</fit-text></viz-pill></viz-shelf></div>
<viz-shelf><viz-icon slot="icon" name="rows"></viz-icon><fit-text slot="title" w="57">Rows</fit-text><viz-pill kind="measure"><fit-text w="154">AVG(Latitude)</fit-text></viz-pill></viz-shelf>
<div class="view"><viz-sheet></viz-sheet><viz-legends></viz-legends></div>
</div>`);
</script>
</body>
</html>
